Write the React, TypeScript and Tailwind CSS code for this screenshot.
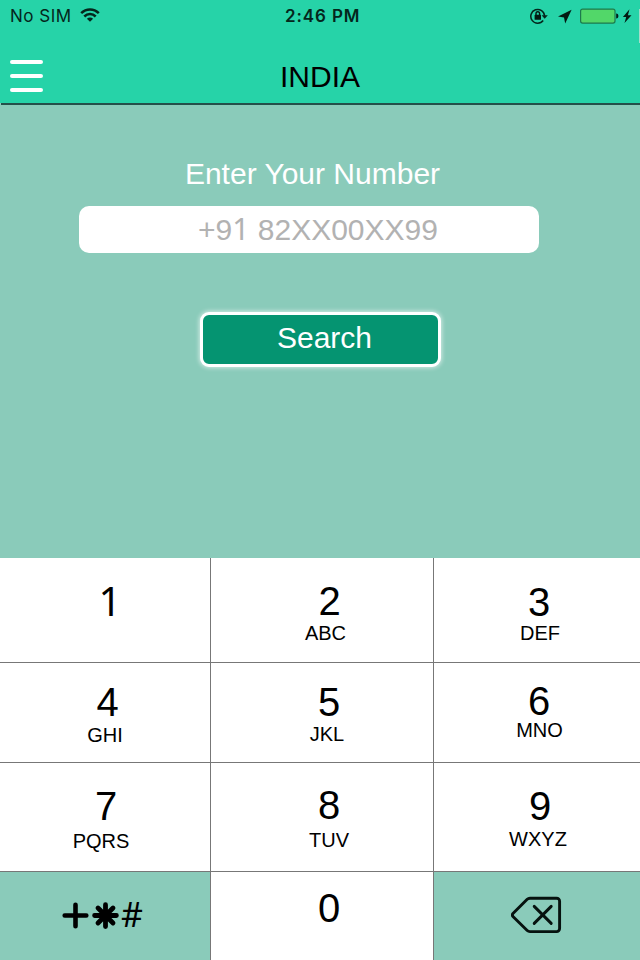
import clsx from "clsx";

interface KeyProps {
    digit: string;
    letters?: string;
    digitClass: string;
    lettersClass?: string;
    className?: string;
}

const keys: Array<KeyProps> = [
    { digit: "1", digitClass: "pt-[23px] pl-[10px] font-['Noto_Sans',sans-serif]" },
    { digit: "2", digitClass: "pt-[23px] pl-[15px]", letters: "ABC", lettersClass: "mt-[2px] pl-[7px]" },
    { digit: "3", digitClass: "pt-[24px] pl-[4px]", letters: "DEF", lettersClass: "mt-[1px] pl-[6px]" },
    { digit: "4", digitClass: "pt-[19px] pl-[5px]", letters: "GHI", lettersClass: "mt-[3px]" },
    { digit: "5", digitClass: "pt-[19px] pl-[14px]", letters: "JKL", lettersClass: "mt-[2px] pl-[10px]" },
    { digit: "6", digitClass: "pt-[18px] pl-[4px]", letters: "MNO", lettersClass: "-mt-[1px] pl-[5px]" },
    { digit: "7", digitClass: "pt-[23px] pl-[2px]", letters: "PQRS", lettersClass: "mt-[5px] pr-[8px]" },
    { digit: "8", digitClass: "pt-[22px] pl-[14px]", letters: "TUV", lettersClass: "mt-[5px] pl-[14px]" },
    { digit: "9", digitClass: "pt-[23px] pl-[6px]", letters: "WXYZ", lettersClass: "mt-[3px] pl-[2px]" },
];

function Key({ digit, letters, digitClass, lettersClass, className }: KeyProps) {
    return (
        <button
            type="button"
            className={clsx("flex flex-col items-center justify-start bg-white border-[#777777] text-black", className)}
        >
            <span className={clsx("text-[40px] leading-none", digitClass)}>{digit}</span>
            {letters && <span className={clsx("text-[20px] leading-none", lettersClass)}>{letters}</span>}
        </button>
    );
}

function StatusBar() {
    return (
        <div className="grid grid-cols-[1fr_80px_1fr] h-8 items-center font-['Inter',sans-serif] text-[17px] text-[#04261c]">
            <div className="flex items-center pl-[10px] gap-[8px]">
                <span className="pt-[2px] tracking-[0.5px]">No SIM</span>
                <svg width="20" height="14" viewBox="0 0 20 14" fill="none" stroke="#04261c" strokeWidth="2.5" className="-mt-[2px]">
                    <path d="M1.2 5.2C6.2.2 13.8.2 18.8 5.2" />
                    <path d="M4.3 8.5c3.3-3.3 8.1-3.3 11.4 0" />
                    <path d="M10 13.8 6.9 10.8c1.8-1.8 4.4-1.8 6.2 0z" fill="#04261c" stroke="none" />
                </svg>
            </div>
            <span className="pt-[2px] pl-[5px] font-semibold whitespace-nowrap tracking-[0.9px]">2:46 PM</span>
            <div className="flex items-center justify-end pr-[8px]">
                <svg width="102" height="18" viewBox="0 0 102 18" fill="none" className="-mt-[1px]">
                    <path d="M13.2 13.5A6.9 6.9 0 1 1 14.6 9" stroke="#04261c" strokeWidth="1.5" />
                    <path d="M11.6 8.2h6.2l-3.1 3.6z" fill="#04261c" />
                    <rect x="4.6" y="7.8" width="6.4" height="5" rx=".6" fill="#031a13" />
                    <path d="M6 8V6.6a1.8 1.8 0 0 1 3.6 0V8" stroke="#031a13" strokeWidth="1.4" />
                    <path d="M41.6 2.8 35.2 16.4l-1.2-5.8-6-1.2z" fill="#031a13" />
                    <rect x="50.6" y="2.1" width="34.4" height="14" rx="2" fill="#52d769" stroke="#1d7a4c" strokeWidth="1.2" />
                    <path d="M86.2 6.6c1.6 0 2.2 1 2.2 2.5s-.6 2.5-2.2 2.5z" fill="#031a13" />
                    <path d="m99.5 2.2-6.6 7.7h3.3l-1.7 6.2 7-7.9h-3.6z" fill="#031a13" />
                </svg>
            </div>
        </div>
    );
}

export default function App() {
    return (
        <div className="relative flex flex-col w-[640px] h-[960px] overflow-hidden bg-[#8acbba] font-['Liberation_Sans',Arial,sans-serif]">
            <header className="flex flex-col h-[103px] shrink-0 bg-[#26d3a8]">
                <StatusBar />
                <div className="grid grid-cols-[43px_1fr_43px] items-start">
                    <button type="button" aria-label="Menu" className="flex flex-col gap-[10px] pl-[10px] pt-[28px]">
                        <span className="w-[33px] h-[4px] rounded-full bg-white" />
                        <span className="w-[33px] h-[4px] rounded-full bg-white" />
                        <span className="w-[33px] h-[4px] rounded-full bg-white" />
                    </button>
                    <h1 className="pt-[30px] text-center text-[30px] leading-[30px] text-black">INDIA</h1>
                </div>
            </header>
            <div className="ml-px h-[2px] shrink-0 bg-[#24504a]" />
            <div className="absolute right-0 top-[9px] w-[1px] h-[34px] bg-[#a5dccb]" />

            <main className="flex flex-col h-[453px] shrink-0">
                <label className="pt-[54px] pr-[15px] text-center text-[30px] leading-[30px] text-white">
                    Enter Your Number
                </label>
                <div className="mt-[17px] ml-[79px] w-[460px] h-[47px] rounded-[10px] bg-white pl-[18px] text-center text-[30px] leading-[47px] text-[#b2b2b2]">
                    +9<span className="font-['Noto_Sans',sans-serif] leading-none">1</span> 82XX00XX99
                </div>
                <button
                    type="button"
                    className="mt-[59px] ml-[200px] w-[241px] h-[55px] rounded-[9px] border-[3px] border-white bg-[#059471] pb-[4px] pl-[8px] text-[30px] leading-[30px] text-white shadow-[0_0_4px_1px_rgba(255,255,255,0.6)]"
                >
                    Search
                </button>
            </main>

            <div className="grid grid-cols-[211px_223px_206px] grid-rows-[105px_100px_109px_88px]">
                {keys.map((k, i) => (
                    <Key key={k.digit} {...k} className={i % 3 === 2 ? "border-b" : "border-b border-r"} />
                ))}
                <button
                    type="button"
                    aria-label="Symbols"
                    className="flex items-start border-r border-[#777777] pl-[62px] pt-[30px] text-black"
                >
                    <svg width="59" height="28" viewBox="0 0 59 28" fill="none" stroke="#000" strokeLinecap="round">
                        <path d="M2.7 13.5h21.6M13.5 2.7v21.6" strokeWidth="4.6" />
                        <path d="M32.6 13.5h21.8M43.5 2.7v21.8M36 6l15 15M51 6 36 21" strokeWidth="4.8" />
                    </svg>
                    <span className="-mt-[2px] font-['Noto_Sans',sans-serif] text-[34px] leading-[28px]">#</span>
                </button>
                <Key digit="0" digitClass="pt-[16px] pl-[14px]" className="border-r" />
                <button type="button" aria-label="Delete" className="flex items-start pl-[77px] pt-[24px]">
                    <svg
                        width="51"
                        height="38"
                        viewBox="0 0 51 38"
                        fill="none"
                        stroke="#06120f"
                        strokeWidth="2.9"
                        strokeLinecap="round"
                        strokeLinejoin="round"
                    >
                        <path d="M19 2.2h26.6a3 3 0 0 1 3 3v27.4a3 3 0 0 1-3 3H19a4 4 0 0 1-2.8-1.1L2.2 20.7a2.5 2.5 0 0 1 0-3.5L16.2 3.3A4 4 0 0 1 19 2.2z" />
                        <path d="m23.2 10.4 17 17M40.2 10.4l-17 17" />
                    </svg>
                </button>
            </div>
        </div>
    );
}
